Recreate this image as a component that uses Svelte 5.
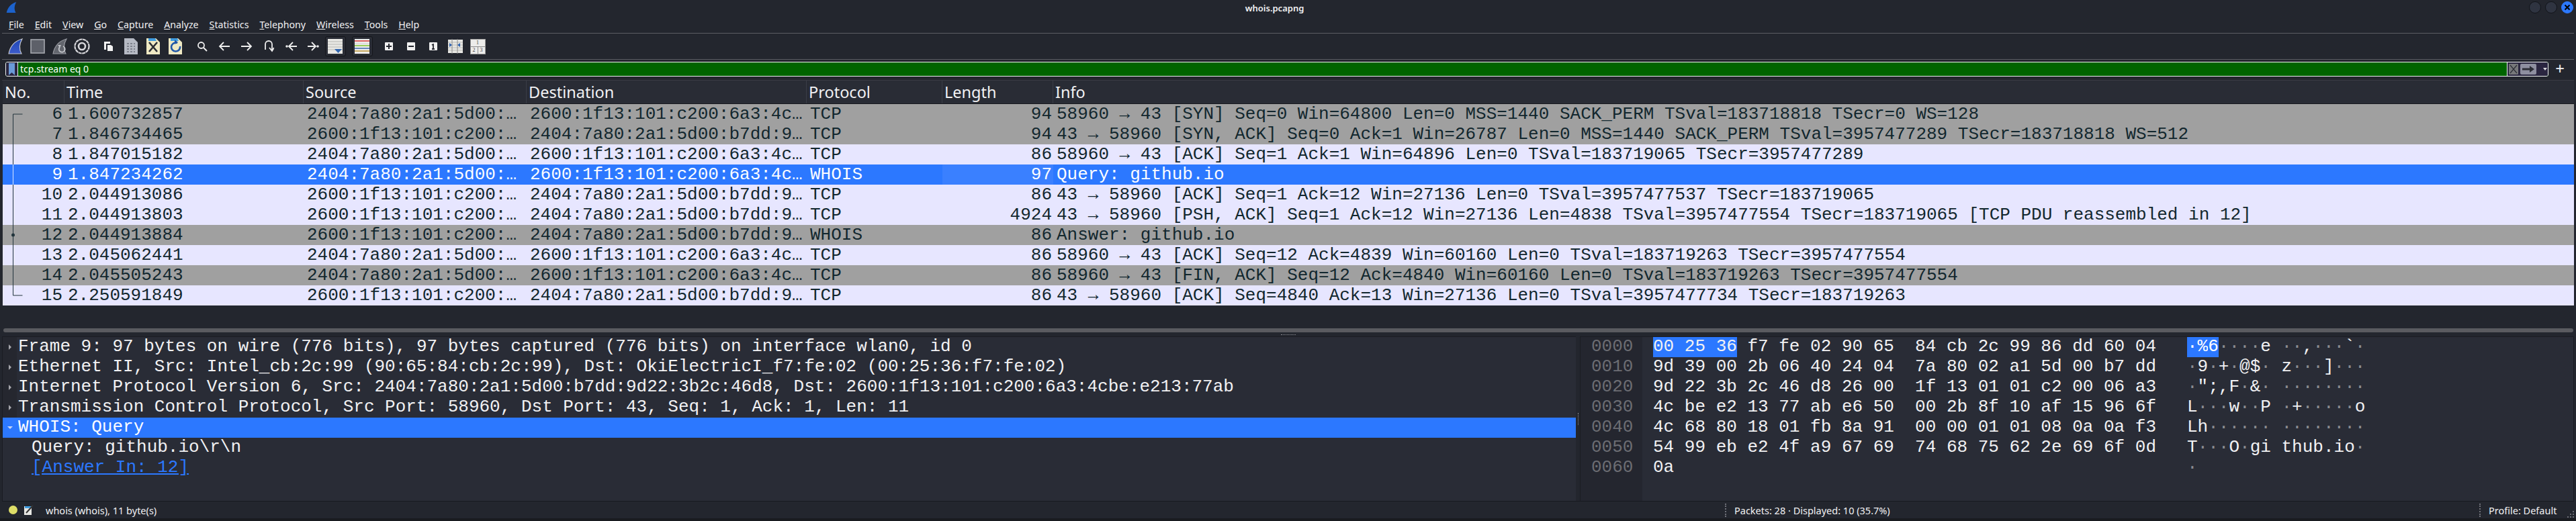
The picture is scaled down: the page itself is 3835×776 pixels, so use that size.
<script>
  const menus = ['File', 'Edit', 'View', 'Go', 'Capture', 'Analyze', 'Statistics', 'Telephony', 'Wireless', 'Tools', 'Help'];

  const packets = [
    { no: 6, time: '1.600732857', src: '2404:7a80:2a1:5d00:…', dst: '2600:1f13:101:c200:6a3:4c…', proto: 'TCP', len: 94, info: '58960 → 43 [SYN] Seq=0 Win=64800 Len=0 MSS=1440 SACK_PERM TSval=183718818 TSecr=0 WS=128', kind: 'gray' },
    { no: 7, time: '1.846734465', src: '2600:1f13:101:c200:…', dst: '2404:7a80:2a1:5d00:b7dd:9…', proto: 'TCP', len: 94, info: '43 → 58960 [SYN, ACK] Seq=0 Ack=1 Win=26787 Len=0 MSS=1440 SACK_PERM TSval=3957477289 TSecr=183718818 WS=512', kind: 'gray' },
    { no: 8, time: '1.847015182', src: '2404:7a80:2a1:5d00:…', dst: '2600:1f13:101:c200:6a3:4c…', proto: 'TCP', len: 86, info: '58960 → 43 [ACK] Seq=1 Ack=1 Win=64896 Len=0 TSval=183719065 TSecr=3957477289', kind: 'light' },
    { no: 9, time: '1.847234262', src: '2404:7a80:2a1:5d00:…', dst: '2600:1f13:101:c200:6a3:4c…', proto: 'WHOIS', len: 97, info: 'Query: github.io', kind: 'sel' },
    { no: 10, time: '2.044913086', src: '2600:1f13:101:c200:…', dst: '2404:7a80:2a1:5d00:b7dd:9…', proto: 'TCP', len: 86, info: '43 → 58960 [ACK] Seq=1 Ack=12 Win=27136 Len=0 TSval=3957477537 TSecr=183719065', kind: 'light' },
    { no: 11, time: '2.044913803', src: '2600:1f13:101:c200:…', dst: '2404:7a80:2a1:5d00:b7dd:9…', proto: 'TCP', len: 4924, info: '43 → 58960 [PSH, ACK] Seq=1 Ack=12 Win=27136 Len=4838 TSval=3957477554 TSecr=183719065 [TCP PDU reassembled in 12]', kind: 'light' },
    { no: 12, time: '2.044913884', src: '2600:1f13:101:c200:…', dst: '2404:7a80:2a1:5d00:b7dd:9…', proto: 'WHOIS', len: 86, info: 'Answer: github.io', kind: 'gray' },
    { no: 13, time: '2.045062441', src: '2404:7a80:2a1:5d00:…', dst: '2600:1f13:101:c200:6a3:4c…', proto: 'TCP', len: 86, info: '58960 → 43 [ACK] Seq=12 Ack=4839 Win=60160 Len=0 TSval=183719263 TSecr=3957477554', kind: 'light' },
    { no: 14, time: '2.045505243', src: '2404:7a80:2a1:5d00:…', dst: '2600:1f13:101:c200:6a3:4c…', proto: 'TCP', len: 86, info: '58960 → 43 [FIN, ACK] Seq=12 Ack=4840 Win=60160 Len=0 TSval=183719263 TSecr=3957477554', kind: 'gray' },
    { no: 15, time: '2.250591849', src: '2600:1f13:101:c200:…', dst: '2404:7a80:2a1:5d00:b7dd:9…', proto: 'TCP', len: 86, info: '43 → 58960 [ACK] Seq=4840 Ack=13 Win=27136 Len=0 TSval=3957477734 TSecr=183719263', kind: 'light' }
  ];

  const details = [
    'Frame 9: 97 bytes on wire (776 bits), 97 bytes captured (776 bits) on interface wlan0, id 0',
    'Ethernet II, Src: Intel_cb:2c:99 (90:65:84:cb:2c:99), Dst: OkiElectricI_f7:fe:02 (00:25:36:f7:fe:02)',
    'Internet Protocol Version 6, Src: 2404:7a80:2a1:5d00:b7dd:9d22:3b2c:46d8, Dst: 2600:1f13:101:c200:6a3:4cbe:e213:77ab',
    'Transmission Control Protocol, Src Port: 58960, Dst Port: 43, Seq: 1, Ack: 1, Len: 11'
  ];

  const dump = [
    '00 25 36 f7 fe 02 90 65 84 cb 2c 99 86 dd 60 04',
    '9d 39 00 2b 06 40 24 04 7a 80 02 a1 5d 00 b7 dd',
    '9d 22 3b 2c 46 d8 26 00 1f 13 01 01 c2 00 06 a3',
    '4c be e2 13 77 ab e6 50 00 2b 8f 10 af 15 96 6f',
    '4c 68 80 18 01 fb 8a 91 00 00 01 01 08 0a 0a f3',
    '54 99 eb e2 4f a9 67 69 74 68 75 62 2e 69 6f 0d',
    '0a'
  ];

  // one entry per byte, printable or not
  function bytesOf(line) {
    return line.split(' ').map((b) => {
      const c = parseInt(b, 16);
      return { hex: b, ch: c > 32 && c < 127 ? String.fromCharCode(c) : '·', dim: !(c > 32 && c < 127) };
    });
  }

  const rows = dump.map((line, i) => ({ offset: (i * 16).toString(16).padStart(4, '0'), bytes: bytesOf(line) }));
</script>

<div class="window">
  <header class="titlebar">
    <svg class="app-icon" width="16" height="16" viewBox="0 0 22 22"><path d="M1 22C3 12 10 3 21 0 17 7 16 15 20 22Z" fill="#1c62cc" /></svg>
    <span class="title">whois.pcapng</span>
    <div class="win-btns">
      <span class="win-btn"></span>
      <span class="win-btn"></span>
      <span class="win-btn close"><svg width="10" height="10" viewBox="0 0 10 10"><path d="M1.5 1.5l7 7M8.5 1.5l-7 7" stroke="#000" stroke-width="2" /></svg></span>
    </div>
  </header>

  <nav class="menubar">
    {#each menus as m}
      <span class="menu"><u>{m[0]}</u>{m.slice(1)}</span>
    {/each}
  </nav>

  <div class="toolbar">
    <span class="tool"><svg width="24" height="24" viewBox="0 0 24 24"><defs><linearGradient id="fin" x1="0" y1="0" x2="0" y2="1"><stop offset="0" stop-color="#1f46b4" /><stop offset="1" stop-color="#3d5ccc" /></linearGradient></defs><path d="M2 23C4 12 11 4 22 1 18 8 17 16 21 23Z" fill="url(#fin)" stroke="#c9cbd2" stroke-width="1.2" /></svg></span>
    <span class="tool"><svg width="22" height="24" viewBox="0 0 22 24"><rect x="1" y="2" width="20" height="20" fill="#5d6069" stroke="#a6a8ae" stroke-width="1.6" /></svg></span>
    <span class="tool"><svg width="24" height="24" viewBox="0 0 24 24"><path d="M2 23C4 12 11 4 22 1 18 8 17 16 21 23Z" fill="#62656d" stroke="#9a9ca3" stroke-width="1.2" /><path d="M17 12a4.5 4.5 0 1 1-5 1" fill="none" stroke="#c3c5ca" stroke-width="1.8" /><path d="M9 10l3 4 2-4z" fill="#c3c5ca" /></svg></span>
    <span class="tool"><svg width="24" height="24" viewBox="0 0 24 24"><circle cx="12" cy="12" r="10.5" fill="none" stroke="#d6d6da" stroke-width="2.2" stroke-dasharray="5 .6" /><circle cx="12" cy="12" r="5" fill="none" stroke="#d6d6da" stroke-width="2.6" /></svg></span>
    <span class="sep"></span>
    <span class="tool"><svg width="16" height="16" viewBox="0 0 16 16"><path d="M1 1h9v3H4v9H1z" fill="#f2f2f2" /><path d="M6 6h5l3 2v7H6z" fill="#f2f2f2" /></svg></span>
    <span class="tool"><svg width="20" height="24" viewBox="0 0 20 24"><path d="M0 0h14l6 6v18H0z" fill="#b6bac4" /><path d="M4 8h3M9 8h3M14 8h2M4 12h3M9 12h3M14 12h2M4 16h3M9 16h3M14 16h2M4 20h3M9 20h3M14 20h2" stroke="#7f838e" stroke-width="2" /></svg></span>
    <span class="tool"><svg width="20" height="24" viewBox="0 0 20 24"><path d="M0 0h14l6 6v18H0z" fill="#efe9c4" /><path d="M3 0h10l2 4H3z" fill="#3f9ce0" /><path d="M4 6l12 14M16 6L4 20" stroke="#2b2d33" stroke-width="2.6" /></svg></span>
    <span class="tool"><svg width="20" height="24" viewBox="0 0 20 24"><path d="M0 0h14l6 6v18H0z" fill="#efe9c4" /><path d="M3 0h10l2 4H3z" fill="#3f9ce0" /><path d="M13 7a6.5 6.5 0 1 0 4 5" fill="none" stroke="#2258a8" stroke-width="2.6" /><path d="M9 2l5 4-5 3z" fill="#2258a8" /></svg></span>
    <span class="sep"></span>
    <span class="tool"><svg width="16" height="16" viewBox="0 0 16 16"><circle cx="6.5" cy="6.5" r="4.5" fill="none" stroke="#eee" stroke-width="1.8" /><path d="M10 10l5 5" stroke="#eee" stroke-width="2" /></svg></span>
    <span class="tool"><svg width="18" height="14" viewBox="0 0 18 14"><path d="M17 7H2M8 1L2 7l6 6" fill="none" stroke="#eee" stroke-width="1.8" /></svg></span>
    <span class="tool"><svg width="18" height="14" viewBox="0 0 18 14"><path d="M1 7h15M10 1l6 6-6 6" fill="none" stroke="#eee" stroke-width="1.8" /></svg></span>
    <span class="tool"><svg width="15" height="18" viewBox="0 0 15 18"><path d="M2 14V6a5 5 0 0 1 10 0v9M8 11l4 5 3-5" fill="none" stroke="#eee" stroke-width="1.8" /></svg></span>
    <span class="tool"><svg width="17" height="14" viewBox="0 0 17 14"><circle cx="2" cy="7" r="1.8" fill="#eee" /><path d="M17 7H6M11 1L5 7l6 6" fill="none" stroke="#eee" stroke-width="1.8" /></svg></span>
    <span class="tool"><svg width="17" height="14" viewBox="0 0 17 14"><circle cx="15" cy="7" r="1.8" fill="#eee" /><path d="M0 7h11M6 1l6 6-6 6" fill="none" stroke="#eee" stroke-width="1.8" /></svg></span>
    <span class="tool on"><svg width="22" height="22" viewBox="0 0 22 22"><rect width="22" height="22" fill="#e8e8e4" /><path d="M0 4h22M0 8h22M0 12h22M0 16h22" stroke="#b5b5b2" stroke-width="1.2" /><path d="M10 15h11l-5.5 6z" fill="#3468b0" /></svg></span>
    <span class="sep"></span>
    <span class="tool on"><svg width="22" height="22" viewBox="0 0 22 22"><rect width="22" height="22" fill="#ececec" /><path d="M0 3h22" stroke="#d92c2c" stroke-width="1.4" /><path d="M0 7h22" stroke="#d8d8d8" stroke-width="1.4" /><path d="M0 10h22" stroke="#76c01c" stroke-width="1.4" /><path d="M0 14h22" stroke="#2a5ca8" stroke-width="1.4" /><path d="M0 18h22" stroke="#b8902a" stroke-width="1.4" /></svg></span>
    <span class="sep"></span>
    <span class="tool"><span class="zoom-btn"><svg width="8" height="8" viewBox="0 0 8 8"><path d="M0 4h8M4 0v8" stroke="#24262e" stroke-width="2" /></svg></span></span>
    <span class="tool"><span class="zoom-btn"><svg width="8" height="8" viewBox="0 0 8 8"><path d="M0 4h8" stroke="#24262e" stroke-width="2" /></svg></span></span>
    <span class="tool"><span class="zoom-btn"><svg width="6" height="9" viewBox="0 0 6 9"><path d="M1 2l2-1v7M1 8h4" fill="none" stroke="#24262e" stroke-width="1.8" /></svg></span></span>
    <span class="tool"><svg width="22" height="22" viewBox="0 0 22 22"><rect width="22" height="20" y="1" fill="#e6e6e2" /><path d="M0 5h22M0 9h22M0 13h22M0 17h22" stroke="#bcbcb8" /><path d="M6 0v22M14 0v22" stroke="#8a8a8a" /><path d="M2 6l4 3-4 3zM18 6l-4 3 4 3z" fill="#2f63b0" /></svg></span>
    <span class="tool"><span class="layout"><span class="l1">1</span><span>2</span><span>3</span></span></span>
  </div>

  <div class="filterbar">
    <div class="filter">
      <span class="bookmark"><svg width="9" height="18" viewBox="0 0 9 18"><path d="M0 0h9v18L4.5 14 0 18z" fill="#6a9ad8" /></svg></span>
      <span class="filter-text">tcp.stream eq 0</span>
      <span class="filter-btns">
        <span class="clear"><svg width="14" height="14" viewBox="0 0 14 14"><path d="M2 1l10 12M12 1L2 13" stroke="#2c2e36" stroke-width="1.2" /></svg></span>
        <span class="apply"><svg width="18" height="10" viewBox="0 0 18 10"><path d="M0 3.5h11V0l7 5-7 5V6.5H0z" fill="#2c2e36" /></svg></span>
        <span class="drop"></span>
      </span>
    </div>
    <span class="plus">+</span>
  </div>

  <div class="list">
    <div class="cols head">
      <span>No.</span><span>Time</span><span>Source</span><span>Destination</span><span>Protocol</span><span>Length</span><span>Info</span>
    </div>
    {#each packets as p}
      <div class="cols row {p.kind}">
        <span class="r">{p.no}</span>
        <span>{p.time}</span>
        <span>{p.src}</span>
        <span>{p.dst}</span>
        <span>{p.proto}</span>
        <span class="r len">{p.len}</span>
        <span>{p.info}</span>
      </div>
    {/each}
    <!-- related packets tree in the No. column -->
    <svg class="tree" width="20" height="300" viewBox="0 0 20 300">
      <path d="M14.5 15H0.5V285H14.5" fill="none" stroke="#22343c" />
      <path d="M0.5 90V120" stroke="#d8e4ff" />
      <circle cx="0.5" cy="195" r="2.5" fill="#22343c" />
    </svg>
  </div>

  <div class="hscroll"><span class="bar"></span></div>
  <div class="hsplit"><span class="grip-h"></span></div>

  <div class="panes">
    <div class="details">
      {#each details as d}
        <div class="drow"><span class="tw"><i class="arrow"></i></span><span class="dtext">{d}</span></div>
      {/each}
      <div class="drow sel"><span class="tw"><i class="arrow down"></i></span><span class="dtext">WHOIS: Query</span></div>
      <div class="drow child">Query: github.io\r\n</div>
      <div class="drow child link"><u>[Answer In: 12]</u></div>
    </div>
    <div class="vsplit"><span class="grip-v"></span></div>
    <div class="bytes">
      <div class="offsets">
        {#each rows as r}<div>{r.offset}</div>{/each}
      </div>
      <div class="hex">
        {#each rows as r, i}
          <div class="bline">
            {#each r.bytes as b, j}<span class="cell" class:hl={i === 0 && j < 3} class:gapped={j === 7}>{b.hex}</span>{/each}
          </div>
        {/each}
      </div>
      <div class="ascii">
        {#each rows as r, i}
          <div class="bline">
            {#each r.bytes as b, j}<span class="ch" class:dim={b.dim} class:hl={i === 0 && j < 3} class:gap1={j === 7}>{b.ch}</span>{/each}
          </div>
        {/each}
      </div>
    </div>
  </div>

  <footer class="status">
    <span class="dot"></span>
    <svg class="note" width="15" height="15" viewBox="0 0 15 15"><rect y="2" width="11" height="13" fill="#e8e8e4" /><rect x="1" y="2" width="9" height="3" fill="#3f9ce0" /><path d="M3 12L13 1" stroke="#333" stroke-width="2" /></svg>
    <span class="st-main">whois (whois), 11 byte(s)</span>
    <span class="st-packets">Packets: 28 · Displayed: 10 (35.7%)</span>
    <span class="st-profile">Profile: Default</span>
    <svg class="sizegrip" width="10" height="10" viewBox="0 0 10 10"><path d="M8 0h2v2H8zM8 4h2v2H8zM4 4h2v2H4zM8 8h2v2H8zM4 8h2v2H4zM0 8h2v2H0z" fill="#6c6e75" /></svg>
  </footer>
  <div class="bottom-strip"></div>
</div>

<style>
  :global(body) {
    margin: 0;
    background: #23262e;
  }

  .window {
    width: 3835px;
    height: 776px;
    overflow: hidden;
    display: flex;
    flex-direction: column;
    background: #23262e;
    color: #f1f1f3;
    font-family: "Noto Sans", sans-serif;
  }

  /* --- title + menu --- */
  .titlebar {
    height: 24px;
    position: relative;
    display: flex;
    align-items: center;
    justify-content: center;
  }
  .app-icon {
    position: absolute;
    left: 9px;
    top: 3px;
  }
  .title {
    font-size: 13px;
    font-weight: 600;
    margin-left: -40px;
  }
  .win-btns {
    position: absolute;
    right: 4px;
    top: 2px;
    display: flex;
    gap: 6px;
  }
  .win-btn {
    width: 18px;
    height: 18px;
    border-radius: 50%;
    background: #2f3441;
    border: 1px solid #12141a;
    box-sizing: border-box;
    display: flex;
    align-items: center;
    justify-content: center;
  }
  .win-btn.close {
    background: #2c78ff;
    border-color: #2c78ff;
  }

  .menubar {
    height: 25px;
    margin: 0 3px;
    padding-left: 2px;
    display: flex;
    align-items: center;
    font-size: 14.2px;
    border-bottom: 1px solid #5c5d63;
  }
  .menu {
    padding: 0 8px;
  }

  /* --- toolbar --- */
  .toolbar {
    height: 38px;
    margin: 0 3px;
    padding-left: 3.5px;
    display: flex;
    align-items: center;
    border-bottom: 1px solid #5c5d63;
  }
  .tool {
    width: 33px;
    height: 30px;
    flex: none;
    display: flex;
    align-items: center;
    justify-content: center;
    box-sizing: border-box;
  }
  .tool.on {
    width: 31px;
    margin: 0 1px;
    background: #2a2d36;
    border: 1px solid #14161b;
    border-radius: 3px;
  }
  .sep {
    width: 7px;
    flex: none;
  }
  .zoom-btn {
    width: 12px;
    height: 12px;
    background: #f1f1f1;
    border-radius: 1px;
    display: flex;
    align-items: center;
    justify-content: center;
  }
  .layout {
    width: 23px;
    height: 23px;
    display: grid;
    grid-template-columns: 1fr 1fr;
    grid-template-rows: 1fr 1fr;
    gap: 1px;
    background: #8c8c8c;
    border: 1px solid #9a9a9a;
    box-sizing: border-box;
    font: 8px "Liberation Serif", serif;
    color: #444;
  }
  .layout span {
    background: #ececea;
    text-align: center;
    line-height: 10px;
  }
  .layout .l1 {
    grid-column: 1 / 3;
  }

  /* --- display filter --- */
  .filterbar {
    height: 31px;
    margin: 0 3px;
    padding: 3px 0 0 5px;
    box-sizing: border-box;
    display: flex;
    align-items: flex-start;
    border-bottom: 1px solid #3a3c44;
  }
  .filter {
    width: 3786px;
    height: 22px;
    flex: none;
    box-sizing: border-box;
    border: 1px solid #eceff0;
    border-radius: 3px;
    display: flex;
    align-items: center;
    background: #006400;
    overflow: hidden;
  }
  .bookmark {
    width: 17px;
    height: 100%;
    flex: none;
    background: #2a2640;
    border-right: 1px solid #eceff0;
    display: flex;
    align-items: center;
    justify-content: center;
  }
  .filter-text {
    flex: 1;
    padding-left: 3px;
    font-size: 14px;
    line-height: 20px;
    color: #fff;
  }
  .filter-btns {
    width: 61px;
    height: 100%;
    flex: none;
    background: #2a2640;
    border-left: 1px solid #eceff0;
    display: flex;
    align-items: center;
    gap: 3px;
    padding-left: 2px;
    box-sizing: border-box;
  }
  .clear {
    width: 14px;
    height: 16px;
    background: #77787b;
    border-radius: 1px;
    display: flex;
    align-items: center;
    justify-content: center;
  }
  .apply {
    width: 24px;
    height: 16px;
    background: #8e8fa0;
    border-radius: 2px;
    display: flex;
    align-items: center;
    justify-content: center;
  }
  .drop {
    margin-left: 7px;
    border: 3px solid transparent;
    border-top: 4px solid #d8d8dc;
    border-bottom: 0;
  }
  .plus {
    margin-left: 2px;
    font-size: 24px;
    line-height: 20px;
    width: 30px;
    text-align: center;
  }

  /* --- packet list --- */
  .list {
    position: relative;
    margin: 0 3px 0 4px;
    height: 335px;
    flex: none;
  }
  .cols {
    display: grid;
    grid-template-columns: 92px 356px 332px 417px 202px 165px 1fr;
  }
  .head {
    height: 35px;
    background: #292c35;
    font-size: 23.5px;
    line-height: 34px;
    border-bottom: 1px solid #16181d;
    box-sizing: border-box;
  }
  .head span {
    padding-left: 3px;
    border-right: 1px solid #3a3d47;
  }
  .head span:last-child {
    border-right: 0;
  }
  .row {
    height: 30px;
    font: 26px/30px "Liberation Mono", monospace;
    color: #12272e;
    white-space: pre;
  }
  .row span {
    padding: 0 3px 0 5px;
    overflow: hidden;
  }
  .row .r {
    text-align: right;
  }
  .row .len {
    padding-right: 2px;
  }
  .gray {
    background: #a0a0a0;
  }
  .light {
    background: #e7e6ff;
  }
  .sel {
    background: #2c78ff;
    color: #fbfcff;
  }
  .row.sel .len {
    background: #3a80ff;
  }
  .tree {
    position: absolute;
    left: 15px;
    top: 35px;
    overflow: visible;
  }

  .hscroll {
    height: 40px;
    margin: 0 3px 0 4px;
    flex: none;
    display: flex;
    align-items: flex-end;
  }
  .bar {
    flex: 1;
    height: 6px;
    margin: 0 1px;
    border-radius: 3px;
    background: #5a5b60;
  }
  .hsplit {
    height: 6px;
    flex: none;
    display: flex;
    align-items: center;
    justify-content: center;
  }
  .grip-h {
    width: 22px;
    border-top: 1px dotted #8a8b90;
  }

  /* --- details + bytes --- */
  .panes {
    height: 245px;
    flex: none;
    margin: 0 3px;
    display: flex;
    font: 26px/28px "Liberation Mono", monospace;
    border-bottom: 1px solid #171920;
  }
  .details {
    width: 2343px;
    flex: none;
    background: #292c36;
    box-sizing: border-box;
    border-left: 1px solid #1a1c22;
    border-top: 1px solid #1a1c22;
  }
  .drow {
    height: 30px;
    display: flex;
    white-space: pre;
  }
  .tw {
    width: 21px;
    flex: none;
    background: #25272f;
    display: flex;
    align-items: center;
    justify-content: center;
  }
  .dtext {
    padding-left: 2px;
  }
  .arrow {
    border: 4px solid transparent;
    border-left: 4px solid #a7a8ae;
    border-right: 0;
  }
  .arrow.down {
    border: 4px solid transparent;
    border-top: 4px solid #c7d6f4;
    border-bottom: 0;
  }
  .drow.sel .tw {
    background: transparent;
  }
  .child {
    padding-left: 43px;
  }
  .link {
    color: #2c78ff;
  }
  .vsplit {
    width: 6px;
    flex: none;
    display: flex;
    align-items: center;
    justify-content: center;
  }
  .grip-v {
    height: 18px;
    border-left: 1px dotted #8a8b90;
  }
  .bytes {
    flex: 1;
    display: flex;
    background: #292c36;
    border: 1px solid #1a1c22;
    border-bottom: 0;
    box-sizing: border-box;
  }
  .offsets {
    width: 92px;
    flex: none;
    padding-left: 16px;
    box-sizing: border-box;
    background: #24262f;
    color: #6c6d73;
  }
  .offsets div,
  .bline {
    height: 30px;
    white-space: pre;
  }
  .hex {
    width: 795px;
    flex: none;
    padding-left: 16px;
  }
  .hex .cell {
    margin-right: 15.6px;
  }
  .hex .cell.gapped {
    margin-right: 31.2px;
  }
  .hex .cell.hl {
    background: #2c78ff;
    display: inline-block;
    height: 30px;
    margin-right: 0;
    padding-right: 15.6px;
  }
  .hex .cell.hl:nth-child(3) {
    padding-right: 0;
    margin-right: 15.6px;
  }
  .ch.dim {
    color: #8a8b90;
  }
  .ch.hl {
    background: #2c78ff;
    display: inline-block;
    height: 30px;
    color: #fff;
  }
  .ch.gap1 {
    margin-right: 15.6px;
  }

  /* --- status bar --- */
  .status {
    height: 25px;
    flex: none;
    position: relative;
    display: flex;
    align-items: center;
    font-size: 14.5px;
    padding-left: 13px;
  }
  .bottom-strip {
    flex: 1;
    background: #191b20;
  }
  .dot {
    width: 13px;
    height: 13px;
    border-radius: 50%;
    background: #dede68;
    flex: none;
  }
  .note {
    margin-left: 10px;
    flex: none;
  }
  .st-main {
    margin-left: 17px;
    width: 2500px;
    flex: none;
    box-sizing: border-box;
  }
  .st-packets {
    width: 1123px;
    flex: none;
    box-sizing: border-box;
    padding-left: 12px;
    border-left: 2px dotted #70727a;
  }
  .st-profile {
    width: 130px;
    flex: none;
    box-sizing: border-box;
    padding-left: 12px;
    border-left: 2px dotted #70727a;
  }
  .sizegrip {
    position: absolute;
    right: 3px;
    bottom: 1px;
  }
</style>
